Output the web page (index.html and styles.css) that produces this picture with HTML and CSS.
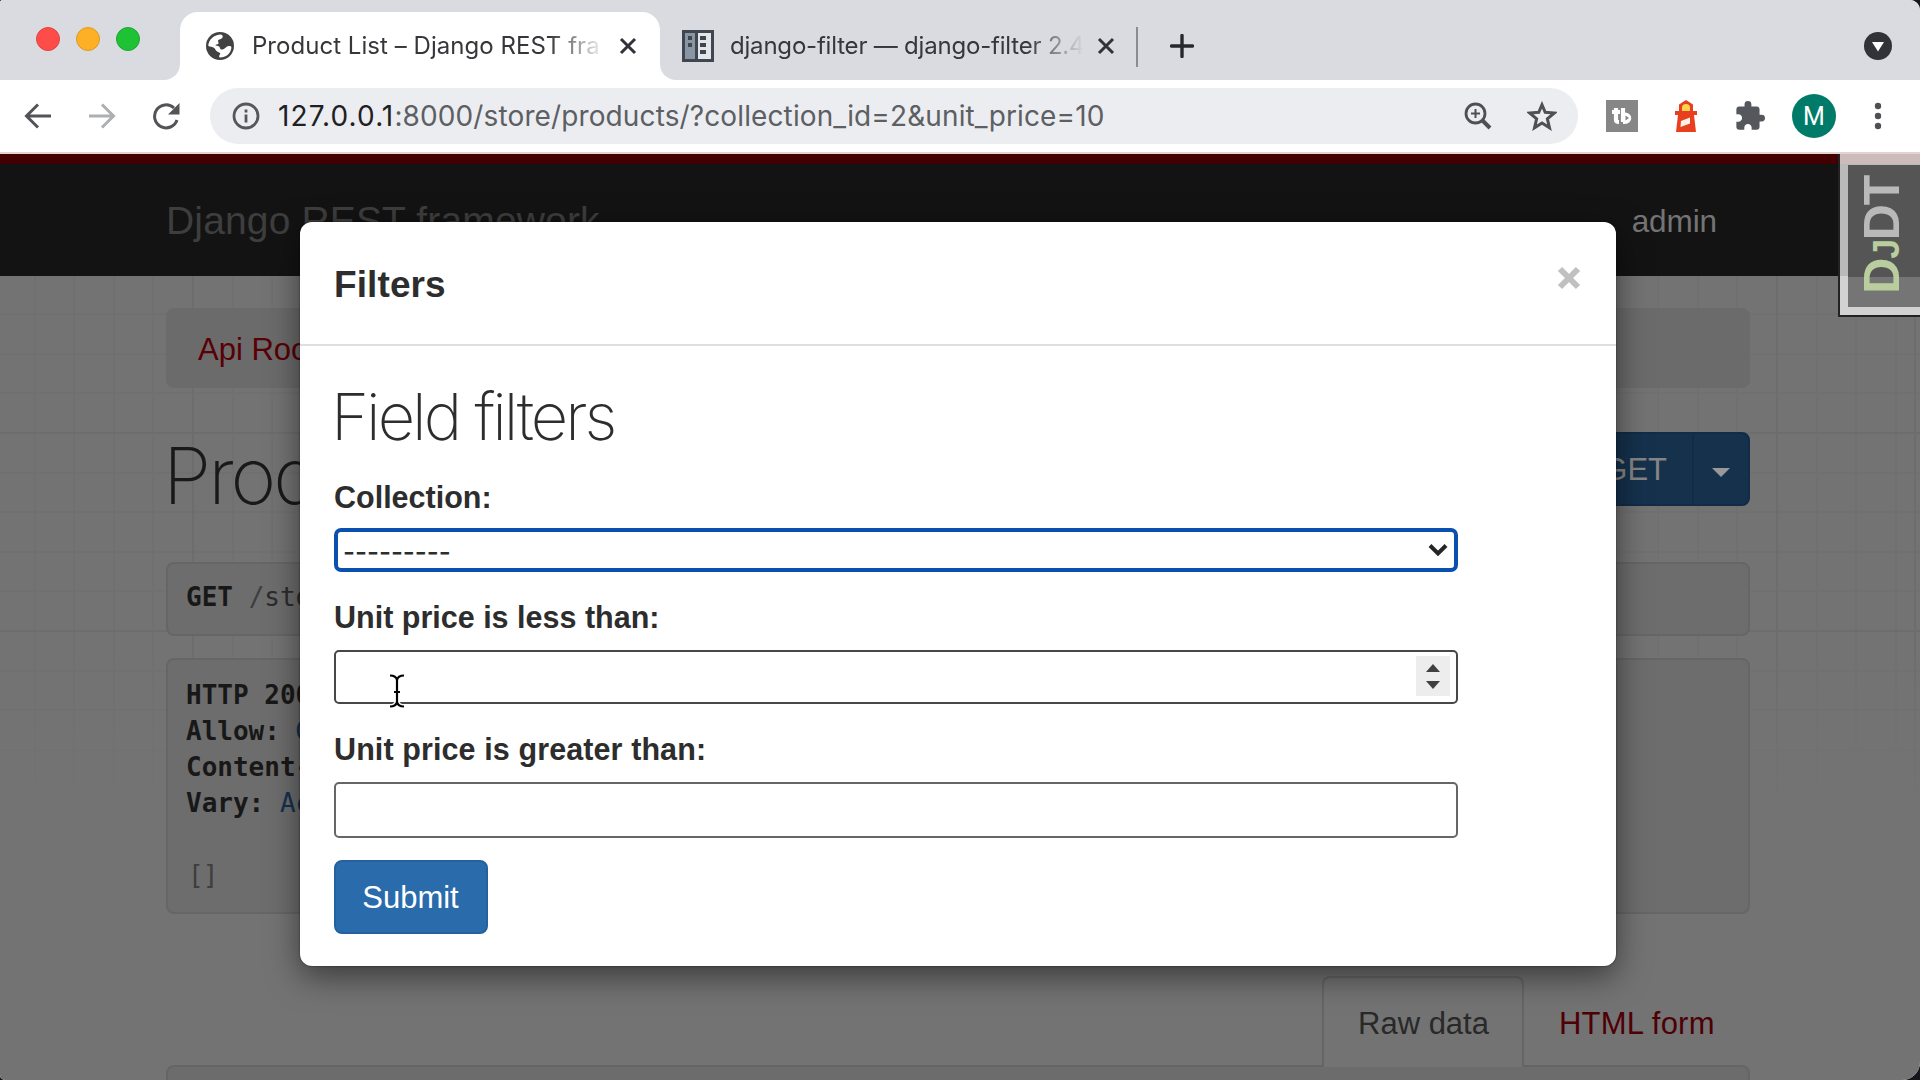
FILE: index.html
```html
<!DOCTYPE html>
<html lang="en">
<head>
<meta charset="utf-8">
<title>Product List – Django REST framework</title>
<link rel="stylesheet" href="styles.css">
</head>
<body>
<div class="window">
  <header class="tabstrip">
    <div class="lights"><i class="light red"></i><i class="light amber"></i><i class="light green"></i></div>
    <div class="tab active">
      <svg class="globe" viewBox="0 0 28 28"><circle cx="14" cy="14" r="14" fill="#424242"/><path d="M2.300 14 C2.500 8 7.500 3 14 2.500 C16.500 2.500 17.300 4 16.500 5.500 C15.500 7.500 12.500 7 12 8.800 C11.800 10 13 10.300 12.500 11.500 C11.500 12.800 9.500 12 9.500 13.500 C12 14 13.500 14 14 16 C14.500 18.500 17 17.500 18.500 16.500 C20 15.500 20.500 14 23 14 C25 14 25.500 14.500 25.400 16 C24.500 22 20 25.300 14 25.500 C12.500 25 13 23.500 14 22.500 C15 21.500 13.500 20.500 12 20 C9.500 19 9.500 17 8 15.800 C6.500 14.600 4 15 2.300 14Z" fill="#fff"/></svg>
      <span class="tab-title">Product List – Django REST fra</span>
      <svg class="x" viewBox="0 0 18 18"><path d="M2 2L16 16M16 2L2 16"/></svg>
    </div>
    <div class="tab second">
      <svg class="book" viewBox="0 0 32 32"><path fill="#3f4650" d="M0 0h32v32H0z"/><path fill="#8896a3" d="M3 3h10v26H3z"/><path fill="#e2e5ea" d="M16 3h13v26H16z"/><path fill="#3f4650" d="M6 6h4v4H6zM6 13h4v4H6zM18 6h6v4h-6zM18 13h6v4h-6zM18 20h6v4h-6z"/></svg>
      <span class="tab-title">django-filter — django-filter 2.4</span>
      <svg class="x" viewBox="0 0 18 18"><path d="M2 2L16 16M16 2L2 16"/></svg>
    </div>
    <i class="divider"></i>
    <svg class="plus" viewBox="0 0 24 24"><path d="M12 1.500V22.500M1.500 12H22.500"/></svg>
    <svg class="menu-dot" viewBox="0 0 28 28"><circle cx="14" cy="14" r="14" fill="#323338"/><path d="M8 10H20L14 19.500Z" fill="#fff"/></svg>
  </header>
  <nav class="toolbar">
    <svg class="nav-icon" viewBox="0 0 28 28"><path d="M27 14H3M14 2.500L2.500 14L14 25.500"/></svg>
    <svg class="nav-icon faded" viewBox="0 0 28 28"><path d="M1 14H25M14 2.500L25.500 14L14 25.500"/></svg>
    <svg class="nav-icon reload" viewBox="0 0 28 28"><path d="M25 18A11.500 11.500 0 1 1 22 6"/><path class="solid" d="M27.500 1V12.500H16Z"/></svg>
    <div class="omnibox">
      <svg class="info" viewBox="0 0 28 28"><circle cx="14" cy="14" r="12"/><path d="M14 12.500V20.500M14 7.500V10.500"/></svg>
      <span class="url"><b>127.0.0.1</b>:8000/store/products/?collection_id=2&amp;unit_price=10</span>
      <svg class="magnify" viewBox="0 0 28 28"><circle cx="11.500" cy="11.500" r="9.500"/><path class="thin" d="M11.500 7V16M7 11.500H16"/><path class="thick" d="M18.500 18.500L26 26"/></svg>
      <svg class="star" viewBox="0 0 28 28"><path d="M14 3.500L17 10.600L25.300 11.300L19 16.600L21 25L14 20.500L7 25L9 16.600L2.700 11.300L11 10.600Z"/></svg>
    </div>
    <svg class="ext tb" viewBox="0 0 32 32"><path fill="#868686" d="M0 0h32v32H0z"/><path d="M10 8V20Q10 22 13 22M6 12H14M17 8V22" fill="none" stroke="#fff" stroke-width="4.200"/><path d="M17 12.500H19A6 5.500 0 0 1 19 24H17Z" fill="#fff"/><path d="M19.500 15.500L23 18L19.500 20.500Z" fill="#868686"/></svg>
    <svg class="ext house" viewBox="0 0 22 32"><path fill="#e8401f" d="M11 0L18 4.500V11H22V15H19L21 32H1L3 15H0V11H4V4.500Z"/><path fill="#fbd34d" d="M7 11V8A4 4 0 0 1 15 8V11Z"/><path fill="#fff1e8" d="M6 21L15 17.500V23.500L5.500 27Z"/></svg>
    <svg class="ext puzzle" viewBox="1 1 22 22"><path fill="#54575c" d="M20.500 11H19V7c0-1.100-.9-2-2-2h-4V3.500a2.500 2.500 0 0 0-5 0V5H4c-1.100 0-1.990.9-1.990 2v3.800H3.500c1.490 0 2.700 1.210 2.700 2.700s-1.210 2.700-2.700 2.700H2V20c0 1.100.9 2 2 2h3.800v-1.500c0-1.490 1.210-2.700 2.700-2.700 1.490 0 2.700 1.210 2.700 2.700V22H17c1.100 0 2-.9 2-2v-4h1.500a2.500 2.500 0 0 0 0-5z"/></svg>
    <span class="avatar">M</span>
    <svg class="dots" viewBox="0 0 8 28"><circle cx="4" cy="4" r="3.200"/><circle cx="4" cy="14" r="3.200"/><circle cx="4" cy="24" r="3.200"/></svg>
  </nav>
  <main class="page">
    <div class="navbar"><div class="container"><span class="brand">Django REST framework</span><span class="user">admin</span></div></div>
    <div class="grid"></div>
    <div class="container content">
      <div class="breadcrumb">Api Root</div>
      <div class="title-row"><h1>Product</h1><div class="btn-group"><span class="get">GET</span><span class="caret"><i></i></span></div></div>
      <pre class="box request"><b>GET</b> <em>/</em>store</pre>
      <pre class="box response"><b>HTTP 200</b>
<b>Allow:</b> <a>GET</a>
<b>Content-</b>
<b>Vary:</b> <a>Acc</a>

<em class="body">[]</em></pre>
      <div class="tabs"><span class="raw">Raw data</span><span class="form">HTML form</span></div>
      <div class="well"></div>
    </div>
    <aside class="djdt"><div><span>D<small>J</small></span>DT</div></aside>
    <section class="modal">
      <div class="modal-head"><h4>Filters</h4><svg viewBox="0 0 24 24"><path d="M3 3L21 21M21 3L3 21"/></svg></div>
      <form class="modal-body">
        <h2>Field filters</h2>
        <label>Collection:</label>
        <div class="select"><span>---------</span><svg viewBox="0 0 20 14"><path d="M2 2.500L10 10.500L18 2.500"/></svg></div>
        <label class="second-label">Unit price is less than:</label>
        <div class="input strong"><div class="spinner"><i class="up"></i><i class="down"></i></div></div>
        <label class="third-label">Unit price is greater than:</label>
        <div class="input last"></div>
        <div class="submit">Submit</div>
      </form>
    </section>
    <svg class="ibeam" viewBox="0 0 18 36"><path class="halo" d="M2 2.500Q8 2.500 9 7Q10 2.500 16 2.500M9 7V29M2 33.500Q8 33.500 9 29Q10 33.500 16 33.500M6 19H12"/><path d="M2 2.500Q8 2.500 9 7Q10 2.500 16 2.500M9 7V29M2 33.500Q8 33.500 9 29Q10 33.500 16 33.500M6 19H12"/></svg>
  </main>
</div>
</body>
</html>
```
FILE: styles.css
```css
* { box-sizing: border-box; }
body { margin: 0; background: #15161c; font-family: "Liberation Sans", Arial, sans-serif; }
svg { display: block; flex: none; fill: none; }
.window { width: 1920px; height: 1080px; overflow: hidden; border-radius: 3px 10px 18px 5px; display: flex; flex-direction: column; background: #fff; }

.tabstrip { height: 80px; flex: none; display: flex; align-items: flex-start; background: linear-gradient(#fff, #fff) 164px 100% / 520px 20px no-repeat, #dadbe0; padding-right: 28px; }
.lights { display: flex; gap: 16px; padding: 27px 40px 0 36px; width: 180px; height: 80px; flex: none; background: #dadbe0; border-bottom-right-radius: 16px; }
.light { width: 24px; height: 24px; border-radius: 50%; }
.red { background: #fe4c48; border: 1px solid #e0443f; }
.amber { background: #fdb025; border: 1px solid #dd9a22; }
.green { background: #1fc135; border: 1px solid #1ba82e; }
.tab { display: flex; align-items: center; height: 68px; margin-top: 12px; font: 24px/30px Inter, sans-serif; color: #36373b; flex: none; }
.active { width: 480px; background: #fff; border-radius: 18px 18px 0 0; padding-left: 26px; }
.second { width: 476px; padding-left: 22px; height: 80px; margin-top: 0; padding-top: 12px; border-bottom-left-radius: 16px; background: #dadbe0; }
.globe { width: 28px; height: 28px; margin-right: 18px; }
.book { width: 32px; height: 32px; margin-right: 16px; }
.tab-title { width: 354px; white-space: nowrap; overflow: hidden; letter-spacing: -0.2px; -webkit-mask-image: linear-gradient(90deg, #000 84%, transparent 100%); mask-image: linear-gradient(90deg, #000 84%, transparent 100%); }
.active .tab-title { letter-spacing: 0.04px; }
.x { width: 18px; height: 18px; margin-left: 13px; stroke: #323338; stroke-width: 3; }
.divider { width: 2px; height: 40px; margin-top: 27px; background: #8a8b90; flex: none; }
.plus { width: 24px; height: 24px; margin: 34px auto 0 32px; stroke: #27282d; stroke-width: 3.4; stroke-linecap: round; }
.menu-dot { width: 28px; height: 28px; margin-top: 32px; }

.toolbar { height: 74px; flex: none; display: flex; align-items: center; padding: 0 38px 0 24px; background: #fff; border-bottom: 2px solid #e2d5d0; }
.nav-icon { width: 28px; height: 28px; margin-right: 36px; stroke: #525458; stroke-width: 3; }
.faded { stroke: #adafb2; }
.reload { margin-right: 30px; }
.reload .solid { fill: #525458; stroke: none; }
.omnibox { width: 1368px; height: 56px; border-radius: 28px; background: #ecedf1; display: flex; align-items: center; padding: 0 21px 0 22px; flex: none; }
.info { width: 28px; height: 28px; stroke: #55575b; stroke-width: 2.8; margin-right: 18px; }
.url { font: 28px/36px Inter, sans-serif; color: #5c5f63; white-space: nowrap; flex: 1; letter-spacing: 0.12px; }
.url b { font-weight: 400; color: #1f2023; letter-spacing: 1.1px; }
.magnify { width: 28px; height: 28px; stroke: #4e5054; stroke-width: 2.8; margin-right: 35px; }
.thin { stroke-width: 2; }
.thick { stroke-width: 4; }
.star { width: 30px; height: 30px; stroke: #4e5054; stroke-width: 2.8; }
.tb { width: 32px; height: 32px; margin-left: 28px; }
.house { width: 22px; height: 32px; margin-left: 37px; }
.puzzle { width: 30px; height: 30px; margin-left: 38px; }
.avatar { width: 44px; height: 44px; border-radius: 50%; background: #007b69; color: #fff; font: 25px/45px Roboto, sans-serif; text-align: center; margin-left: 27px; flex: none; }
.dots { width: 8px; height: 28px; fill: #4e5054; margin-left: auto; }

.page { flex: 1; position: relative; overflow: hidden; background: #737373; }
.navbar { height: 122px; border-top: 10px solid #420003; background: #131313; }
.container { width: 1584px; margin-left: 166px; }
.navbar .container { display: flex; justify-content: space-between; padding: 34px 33px 0 0; line-height: 46px; }
.brand { font-size: 39px; color: #3e3e3e; letter-spacing: 0.15px; }
.user { font-size: 31.500px; letter-spacing: -0.1px; color: #747474; }
.grid { position: absolute; inset: 122px 0 0 0; background: repeating-linear-gradient(90deg, #6d6d6d 0 2px, transparent 2px 198px) -6px 0, repeating-linear-gradient(#6d6d6d 0 2px, transparent 2px 198px) 0 -42px, repeating-linear-gradient(90deg, #707070 0 2px, transparent 2px 39.6px) -6px 0, repeating-linear-gradient(#707070 0 2px, transparent 2px 39.6px) 0 -42px; -webkit-mask-image: linear-gradient(#000 45%, transparent 66%); mask-image: linear-gradient(#000 45%, transparent 66%); }
.content { position: relative; }
.breadcrumb { margin-top: 32px; height: 80px; padding-left: 32px; font-size: 31px; line-height: 84px; border-radius: 8px; background: #6b6b6b; color: #580006; }
.title-row { display: flex; justify-content: space-between; align-items: flex-start; height: 174px; padding-top: 44px; }
h1 { margin: -6px 0 0 -3px; font: 200 78px/100px Inter, sans-serif; letter-spacing: -3px; color: #191919; }
.btn-group { display: flex; height: 74px; border-radius: 8px; background: #15314c; border: 2px solid #122b47; font-size: 31px; line-height: 71px; color: #858585; }
.get { padding: 0 25px; border-right: 2px solid #122b47; }
.caret { width: 54px; display: flex; align-items: center; justify-content: center; }
.caret i { border: 9px solid transparent; border-top-color: #999; border-bottom: 0; margin-top: 6px; }
.box { margin: 0 0 22px; border: 2px solid #65666a; border-radius: 8px; background: #6d6d6d; padding: 17px 18px; font: 26px/36px "DejaVu Sans Mono", monospace; color: #2b2b2b; }
.box b { color: #181818; }
.box em { font-style: normal; color: #3e3e3e; }
.box a { color: #15304e; }
.box .body { display: inline-block; margin-left: 2px; letter-spacing: -1px; line-height: 33px; }
.request { height: 74px; padding-top: 15px; }
.response { height: 256px; }
.tabs { display: flex; justify-content: flex-end; height: 91px; margin-top: 62px; margin-bottom: -2px; position: relative; font-size: 31px; line-height: 92px; }
.raw { width: 202px; border: 2px solid #656565; border-bottom: 0; border-radius: 8px 8px 0 0; background: #737373; padding-left: 34px; color: #292929; }
.form { width: 226px; padding-left: 35px; line-height: 96px; color: #4d0006; letter-spacing: 0.2px; }
.well { height: 90px; border: 2px solid #656565; border-radius: 8px; background: #6c6c6c; }
.modal { position: absolute; left: 300px; top: 68px; width: 1316px; height: 744px; border-radius: 12px; background: #fff; box-shadow: 0 10px 32px rgba(0,0,0,.5), 0 0 2px rgba(0,0,0,.6); color: #2d2d2d; }
.modal-head { height: 124px; border-bottom: 2px solid #dfdfdf; display: flex; justify-content: space-between; padding: 0 35px 0 34px; }
h4 { margin: 42px 0 0; font: bold 37px/42px "Liberation Sans", sans-serif; letter-spacing: 0.1px; }
.modal-head svg { width: 24px; height: 24px; margin-top: 44px; stroke: #c0c0c0; stroke-width: 6; }
.modal-body { padding: 0 34px; display: flex; flex-direction: column; align-items: flex-start; }
h2 { margin: 29px 0 0 -3px; height: 104px; font: 200 65px/84px Inter, sans-serif; letter-spacing: -3px; white-space: nowrap; }
label { font-weight: bold; font-size: 30.5px; line-height: 36px; height: 49px; }
.select { width: 1124px; height: 44px; border: 4px solid #0b50af; border-radius: 7px; display: flex; justify-content: space-between; align-items: center; padding: 0 6px 0 5px; font: 500 26px/30px Inter, sans-serif; margin-bottom: 27px; }
.select span { padding-top: 4px; letter-spacing: -0.05px; }
.select svg { width: 20px; height: 14px; stroke: #252525; stroke-width: 4; }
.input { width: 1124px; height: 54px; border: 2px solid #48464a; border-radius: 5px; display: flex; align-items: center; justify-content: flex-end; padding: 0 6px; margin-bottom: 27px; }
.second-label, .third-label { height: 51px; }
.third-label { letter-spacing: 0.1px; }
.input.last { height: 56px; border-color: #666; margin-bottom: 22px; }
.spinner { width: 34px; height: 40px; background: #ededed; display: flex; flex-direction: column; align-items: center; gap: 9px; padding-top: 8px; margin-top: -2px; }
.spinner i { border: 7px solid transparent; }
.spinner .up { border-bottom: 8px solid #404040; border-top: 0; }
.spinner .down { border-top: 8px solid #404040; border-bottom: 0; }
.submit { width: 154px; height: 74px; border: 2px solid #24619e; border-radius: 8px; background: #296bab; color: #fff; text-align: center; font-size: 31px; line-height: 71px; padding-right: 1px; }
.djdt { position: absolute; right: 0; top: 0; width: 82px; height: 163px; border: 2px solid #222; border-right: 0; border-top: 0; background: linear-gradient(#cdbbbb 0 10px, #bababa 10px 122px, #d2d2d2 122px); padding: 11px 0 8px 8px; }
.djdt div { width: 72px; height: 100%; background: linear-gradient(#555 0 112px, #757575 112px); writing-mode: sideways-lr; padding: 0 0 13px 3px; letter-spacing: -1.2px; color: #b9b9b9; font: bold 50px/62px "Liberation Sans", sans-serif; }
.djdt span { color: #b9cd9f; }
.djdt small { font-size: 36px; }
.ibeam { position: absolute; left: 388px; top: 519px; width: 18px; height: 36px; stroke: #000; stroke-width: 2.2; }
.halo { stroke: #fff; stroke-width: 5; }
```
